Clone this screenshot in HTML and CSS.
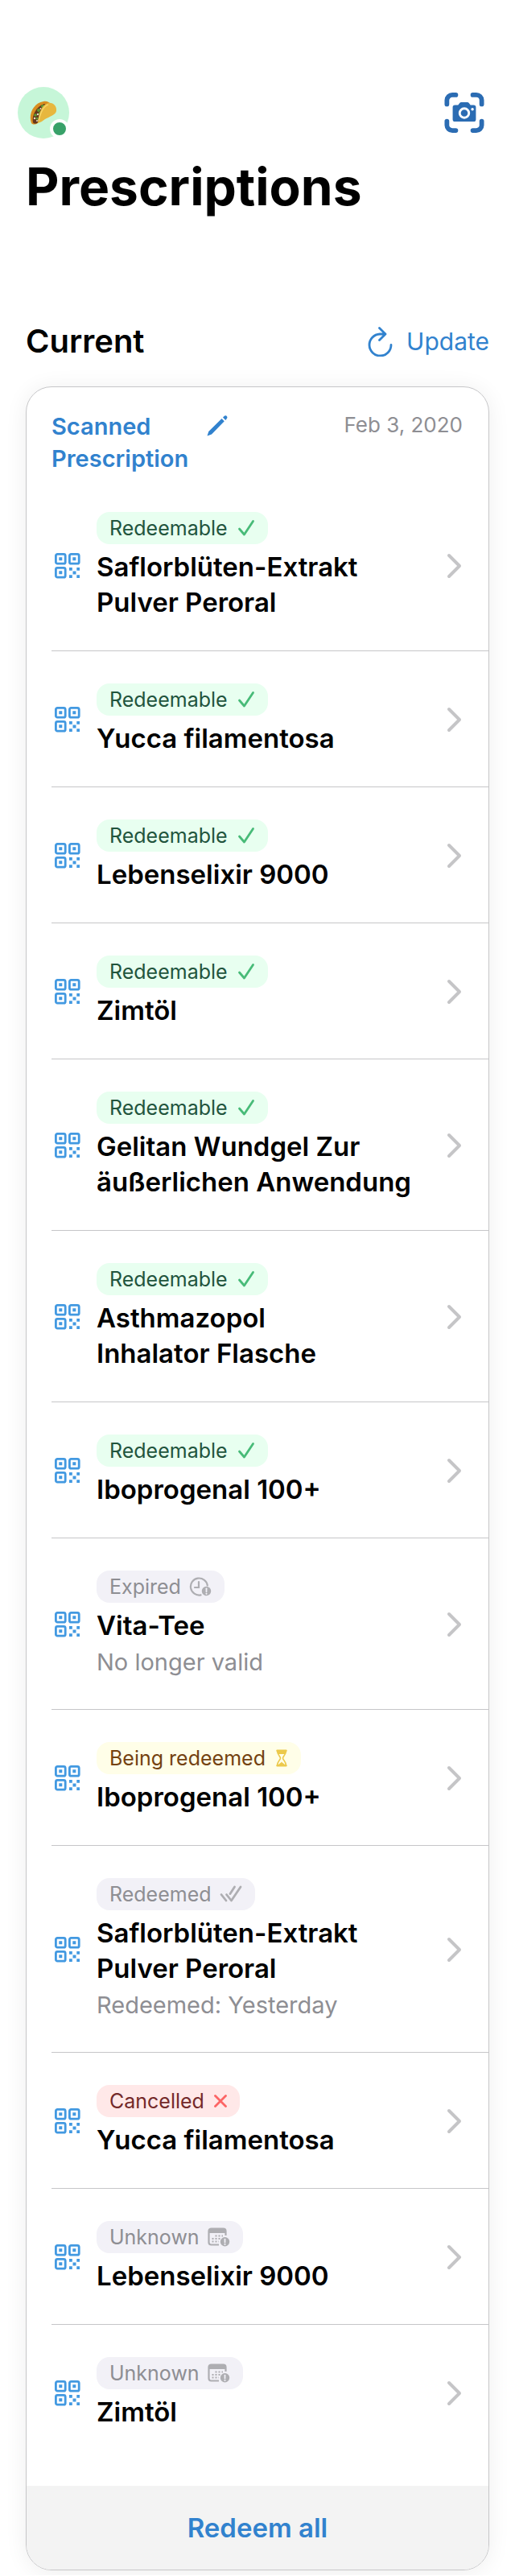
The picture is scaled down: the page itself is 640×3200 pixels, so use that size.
FILE: index.html
```html
<!DOCTYPE html>
<html lang="en">
<head>
<meta charset="utf-8">
<meta name="viewport" content="width=device-width, initial-scale=1">
<title>Prescriptions</title>
<link rel="stylesheet" href="styles.css">
</head>
<body>
<svg class="sprite" aria-hidden="true">
  <symbol id="qr" viewBox="0 0 32 32">
    <g fill="none" stroke="currentColor" stroke-width="2.800"><rect x="1.400" y="1.400" width="11.800" height="11.800" rx="2"/><rect x="18.400" y="1.400" width="11.800" height="11.800" rx="2"/><rect x="1.400" y="18.400" width="11.800" height="11.800" rx="2"/></g>
    <path fill="currentColor" d="M5.300 5.300h4v4h-4zM22.300 5.300h4v4h-4zM5.300 22.300h4v4h-4zM18 18h3.800v3.800H18zM27.300 18H31v3.800h-3.700zM22.500 22.500h4v4h-4zM18 27.300h3.800V31H18zM27.300 27.300H31V31h-3.700z"/>
  </symbol>
  <symbol id="chevron" viewBox="0 0 20 32"><path d="M3 3l13 13L3 29" fill="none" stroke="currentColor" stroke-width="4" stroke-linecap="round" stroke-linejoin="round"/></symbol>
  <symbol id="check" viewBox="0 0 22 22"><path d="M2.500 12L8.500 19 19.500 2.500" fill="none" stroke="currentColor" stroke-width="2.800" stroke-linecap="round" stroke-linejoin="round"/></symbol>
  <symbol id="double-check" viewBox="0 0 28 22"><path d="M2 11.500l6 7.500M8.500 11.500l6 7.500L26 2M13 10.500l5.500-8.500" fill="none" stroke="currentColor" stroke-width="2.800" stroke-linecap="round" stroke-linejoin="round"/></symbol>
  <symbol id="cross" viewBox="0 0 16 22"><path d="M1.500 4.500l13 13M14.500 4.500l-13 13" fill="none" stroke="currentColor" stroke-width="2.800" stroke-linecap="round"/></symbol>
  <symbol id="hourglass" viewBox="0 0 16 22">
    <path d="M2.500 1.800h11M2.500 20.200h11" stroke="currentColor" stroke-width="2.400" stroke-linecap="round"/>
    <path d="M2.500 1.500C2.500 7 6.500 8.500 6.500 11S2.500 15 2.500 20.500M13.500 1.500C13.500 7 9.500 8.500 9.500 11s4 4 4 9.500" fill="none" stroke="currentColor" stroke-width="1.600"/>
    <path d="M2.500 1.500h11c0 2 0 3-1 4.500h-9c-1-1.500-1-2.500-1-4.500zM4 20c.5-3 4-3 4-5 0 2 3.500 2 4 5z" fill="currentColor"/>
  </symbol>
  <symbol id="clock-alert" viewBox="0 0 28 24">
    <path d="M22.800 10.500A10.500 10.500 0 1 0 14.500 22.300M12 6v7H7" fill="none" stroke="currentColor" stroke-width="2.200" stroke-linecap="round"/>
    <circle cx="21.500" cy="17.500" r="5.700" fill="currentColor"/>
    <path d="M21.500 14.300v4" stroke="#f2f1f7" stroke-width="1.800" stroke-linecap="round"/><circle cx="21.500" cy="20.800" r="1.100" fill="#f2f1f7"/>
  </symbol>
  <symbol id="calendar-alert" viewBox="0 0 28 24">
    <path d="M22.500 10V4.500A3 3 0 0 0 19.500 1.500h-15A3 3 0 0 0 1.500 4.500v14a3 3 0 0 0 3 3H14" fill="none" stroke="currentColor" stroke-width="2.200"/>
    <path d="M1.500 7V4.500a3 3 0 0 1 3-3h15a3 3 0 0 1 3 3V7z" fill="currentColor"/>
    <path d="M9.500 10.500H19M5.500 14H16M5.500 17.500H14" stroke="currentColor" stroke-width="1.800" stroke-dasharray="2 2"/>
    <circle cx="21.500" cy="17.800" r="5.700" fill="currentColor"/>
    <path d="M21.500 14.600v4" stroke="#f2f1f7" stroke-width="1.800" stroke-linecap="round"/><circle cx="21.500" cy="21" r="1.100" fill="#f2f1f7"/>
  </symbol>
</svg>
<header class="topbar">
  <button class="avatar" type="button" aria-label="Profile">
    <svg class="taco" viewBox="0 0 34 30" aria-hidden="true">
      <path d="M2 28C-2 18 4 3 17 1c4-1 7 1 9 3L10 28c-3 2-6 2-8 0z" fill="#d98d1f"/>
      <path d="M4 27C2 19 8 7 18 4l4 2-12 21c-2 2-5 2-6 0z" fill="#64371c"/>
      <g fill="#5f9a35"><circle cx="16" cy="7" r="2"/><circle cx="11" cy="12" r="2"/><circle cx="13" cy="16" r="2"/><circle cx="7" cy="18" r="1.800"/><circle cx="9" cy="22" r="1.500"/></g>
      <g fill="#e8ddc4"><circle cx="13.500" cy="10" r="1"/><circle cx="10" cy="17" r="1.200"/><circle cx="6" cy="22" r="1.200"/><circle cx="9" cy="25" r="1"/></g>
      <path d="M10 28C11 17 14 5 23 3c6-1 11 4 10 10-1 5-9 7-14 10-3 2-5 4-9 5z" fill="#e7b73e"/>
      <path d="M11 25C13 16 16 7 23 5" fill="none" stroke="#f5d568" stroke-width="1.500"/>
    </svg>
    <span class="status"></span>
  </button>
  <button class="scan" type="button" aria-label="Scan prescription">
    <svg viewBox="0 0 52 52" aria-hidden="true">
      <path d="M3.500 15V10a7 7 0 0 1 7-7H15M37 3h4.500a7 7 0 0 1 7 7v5M3.500 37v5a7 7 0 0 0 7 7H15M37 49h4.500a7 7 0 0 0 7-7v-5" fill="none" stroke="currentColor" stroke-width="6" stroke-linecap="round"/>
      <path d="M14 16h4l2-2.500a3 3 0 0 1 2-1h8a3 3 0 0 1 2 1l2 2.500h4a3 3 0 0 1 3 3V34.500a3 3 0 0 1-3 3H14a3 3 0 0 1-3-3V19a3 3 0 0 1 3-3z" fill="currentColor"/>
      <circle cx="26" cy="26.500" r="6" fill="none" stroke="#fff" stroke-width="3"/><circle cx="36.500" cy="21.500" r="1.800" fill="#fff"/>
    </svg>
  </button>
</header>
<main>
  <h1>Prescriptions</h1>
  <div class="section-head">
    <h2>Current</h2>
    <button class="update" type="button">
      <svg class="reload" viewBox="0 0 34 38" aria-hidden="true"><path d="M16.500 2.500l7.500 7.500-7.500 7.500M24 10H17A13.500 13.500 0 1 0 31 23.500" fill="none" stroke="currentColor" stroke-width="2.800" stroke-linecap="round" stroke-linejoin="round"/></svg>
      Update
    </button>
  </div>
  <section class="card">
    <div class="card-head">
      <h3>Scanned Prescription</h3>
      <button class="edit" type="button" aria-label="Edit name"><svg viewBox="0 0 28 28" aria-hidden="true"><path d="M1.500 26.500l1.800-5.500L19.500 5l3.300 3.300L7 24.500zM21 3.600l1.800-1.800c1.800-1.800 4.800 1 3.200 3L24.300 6.900z" fill="currentColor"/></svg></button>
      <time datetime="2020-02-03">Feb 3, 2020</time>
    </div>
    <ul class="list">
      <li><a class="row" href="#"><svg class="qr"><use href="#qr"/></svg><span class="info"><span class="pill ok">Redeemable <svg class="i-check"><use href="#check"/></svg></span><span class="name">Saflorblüten-Extrakt<br>Pulver Peroral</span></span><svg class="chev"><use href="#chevron"/></svg></a></li>
      <li><a class="row" href="#"><svg class="qr"><use href="#qr"/></svg><span class="info"><span class="pill ok">Redeemable <svg class="i-check"><use href="#check"/></svg></span><span class="name">Yucca filamentosa</span></span><svg class="chev"><use href="#chevron"/></svg></a></li>
      <li><a class="row" href="#"><svg class="qr"><use href="#qr"/></svg><span class="info"><span class="pill ok">Redeemable <svg class="i-check"><use href="#check"/></svg></span><span class="name">Lebenselixir 9000</span></span><svg class="chev"><use href="#chevron"/></svg></a></li>
      <li><a class="row" href="#"><svg class="qr"><use href="#qr"/></svg><span class="info"><span class="pill ok">Redeemable <svg class="i-check"><use href="#check"/></svg></span><span class="name">Zimtöl</span></span><svg class="chev"><use href="#chevron"/></svg></a></li>
      <li><a class="row" href="#"><svg class="qr"><use href="#qr"/></svg><span class="info"><span class="pill ok">Redeemable <svg class="i-check"><use href="#check"/></svg></span><span class="name">Gelitan Wundgel Zur<br>äußerlichen Anwendung</span></span><svg class="chev"><use href="#chevron"/></svg></a></li>
      <li><a class="row" href="#"><svg class="qr"><use href="#qr"/></svg><span class="info"><span class="pill ok">Redeemable <svg class="i-check"><use href="#check"/></svg></span><span class="name">Asthmazopol<br>Inhalator Flasche</span></span><svg class="chev"><use href="#chevron"/></svg></a></li>
      <li><a class="row" href="#"><svg class="qr"><use href="#qr"/></svg><span class="info"><span class="pill ok">Redeemable <svg class="i-check"><use href="#check"/></svg></span><span class="name">Iboprogenal 100+</span></span><svg class="chev"><use href="#chevron"/></svg></a></li>
      <li><a class="row" href="#"><svg class="qr"><use href="#qr"/></svg><span class="info"><span class="pill muted">Expired <svg class="i-wide"><use href="#clock-alert"/></svg></span><span class="name">Vita-Tee</span><span class="note">No longer valid</span></span><svg class="chev"><use href="#chevron"/></svg></a></li>
      <li><a class="row" href="#"><svg class="qr"><use href="#qr"/></svg><span class="info"><span class="pill busy">Being redeemed <svg class="i-narrow"><use href="#hourglass"/></svg></span><span class="name">Iboprogenal 100+</span></span><svg class="chev"><use href="#chevron"/></svg></a></li>
      <li><a class="row" href="#"><svg class="qr"><use href="#qr"/></svg><span class="info"><span class="pill muted">Redeemed <svg class="i-wide"><use href="#double-check"/></svg></span><span class="name">Saflorblüten-Extrakt<br>Pulver Peroral</span><span class="note">Redeemed: Yesterday</span></span><svg class="chev"><use href="#chevron"/></svg></a></li>
      <li><a class="row" href="#"><svg class="qr"><use href="#qr"/></svg><span class="info"><span class="pill bad">Cancelled <svg class="i-narrow"><use href="#cross"/></svg></span><span class="name">Yucca filamentosa</span></span><svg class="chev"><use href="#chevron"/></svg></a></li>
      <li><a class="row" href="#"><svg class="qr"><use href="#qr"/></svg><span class="info"><span class="pill muted">Unknown <svg class="i-wide"><use href="#calendar-alert"/></svg></span><span class="name">Lebenselixir 9000</span></span><svg class="chev"><use href="#chevron"/></svg></a></li>
      <li><a class="row" href="#"><svg class="qr"><use href="#qr"/></svg><span class="info"><span class="pill muted">Unknown <svg class="i-wide"><use href="#calendar-alert"/></svg></span><span class="name">Zimtöl</span></span><svg class="chev"><use href="#chevron"/></svg></a></li>
    </ul>
    <button class="redeem" type="button">Redeem all</button>
  </section>
</main>
</body>
</html>
```
FILE: styles.css
```css
* { box-sizing: border-box; }
body { margin: 0; background: #fff; color: #000; font-family: Inter, "Liberation Sans", sans-serif; }
button { border: 0; padding: 0; background: none; font: inherit; color: inherit; cursor: pointer; }
svg { display: block; flex: none; }
h1, h2, h3 { margin: 0; }
.sprite { position: absolute; width: 0; height: 0; }
.topbar { display: flex; justify-content: space-between; align-items: center; padding: 108px 38px 0 22px; }
.avatar { position: relative; display: grid; place-items: center; width: 64px; height: 64px; border-radius: 50%; background: #c6f6d8; }
.taco { width: 34px; height: 30px; }
.status { position: absolute; right: 0; bottom: 0; width: 24px; height: 24px; border: 4px solid #fff; border-radius: 50%; background: #38a169; }
.scan { color: #2b6cb3; }
.scan svg { width: 50px; height: 50px; }
main { padding: 20px 32px 6px; }
h1 { font-size: 64px; line-height: 80px; font-weight: 700; }
.section-head { display: flex; justify-content: space-between; align-items: center; padding: 124px 0 28px; }
h2 { font-size: 40px; line-height: 56px; font-weight: 600; }
.update { display: flex; align-items: center; gap: 16px; color: #3182ce; font-size: 30px; line-height: 40px; }
.reload { width: 34px; height: 38px; }
.card { overflow: hidden; border: 1px solid #c6c6c8; border-radius: 32px; box-shadow: 0 2px 28px rgba(0, 0, 0, .07); }
.card-head { display: flex; align-items: flex-start; padding: 29px 32px 6px 31px; }
h3 { width: 192px; color: #3182ce; font-size: 29px; line-height: 40px; font-weight: 600; }
.edit { padding-top: 5px; color: #3182ce; }
.edit svg { width: 28px; height: 28px; }
time { margin-left: auto; color: #8e8e93; font-size: 26px; line-height: 36px; }
.list { margin: 0; padding: 0 0 32px 31px; list-style: none; }
.list li + li { border-top: 1px solid #c6c6c8; }
.row { display: flex; align-items: center; padding: 40px 32px 38px 4px; color: inherit; text-decoration: none; }
.qr { width: 32px; height: 32px; color: #4299e1; }
.info { display: flex; flex: 1; flex-direction: column; align-items: flex-start; margin-left: 20px; }
.chev { width: 20px; height: 40px; color: #c5c5c7; }
.pill { display: flex; align-items: center; gap: 12px; height: 40px; margin-bottom: 6px; padding: 0 16px; border-radius: 16px; font-size: 25px; line-height: 40px; }
.ok { background: #e8fff0; color: #22543d; }
.ok svg { color: #48bb78; }
.muted { gap: 10px; background: #f2f1f7; color: #8e8e93; }
.muted svg { color: #aeaeb2; }
.busy { background: #fffee8; color: #744210; }
.busy svg { color: #ecc94b; }
.bad { background: #ffe8e8; color: #742a2a; }
.bad svg { color: #fc6565; }
.i-check { width: 22px; height: 22px; }
.i-wide { width: 28px; height: 24px; }
.i-narrow { width: 16px; height: 22px; }
.name { font-size: 33px; line-height: 44px; font-weight: 600; }
.note { margin-top: 4px; color: #8e8e93; font-size: 29px; line-height: 40px; }
.redeem { display: block; width: 100%; padding: 30px 0; background: #f3f3f3; color: #3182ce; font-size: 33px; line-height: 44px; font-weight: 600; }
```
